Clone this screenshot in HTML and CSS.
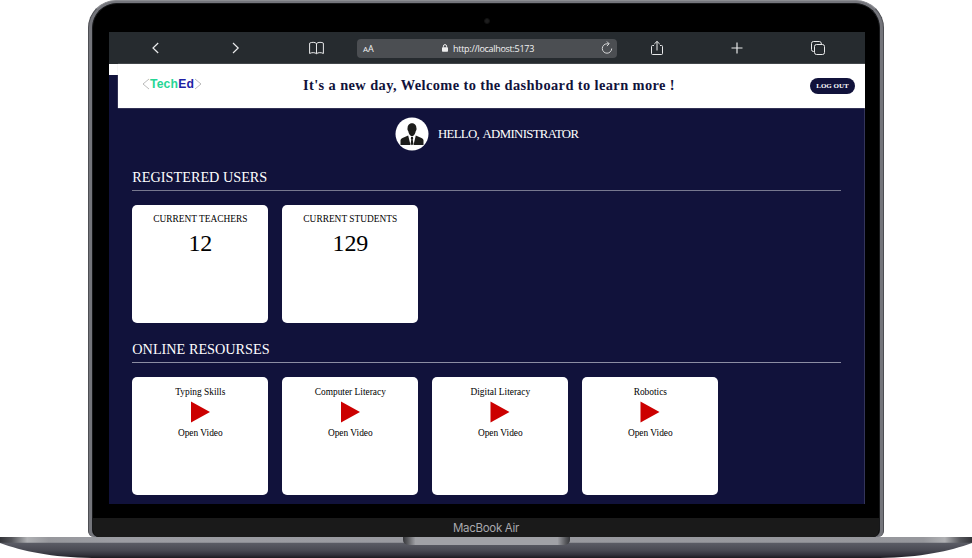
FILE: index.html
```html
<!DOCTYPE html>
<html lang="en">
<head>
<meta charset="utf-8">
<title>TechEd Dashboard</title>
<link rel="stylesheet" href="styles.css">
</head>
<body>
<div class="laptop">
  <div class="lid">
    <div class="bezel">
      <div class="camera-row"><span class="camera"></span></div>
      <div class="screen">
        <nav class="browser">
          <svg class="icon" viewBox="0 0 16 16"><path d="M10.200 3 5 8l5.200 5"/></svg>
          <svg class="icon" viewBox="0 0 16 16"><path d="M5 3l5.200 5L5 13"/></svg>
          <svg class="icon thin" viewBox="0 0 16 16"><path d="M7.500 3.500C6 2 2.500 2 .600 3.200V13.500C2.500 12.300 6 12.300 7.500 13.700 9 12.300 12.500 12.300 14.400 13.500V3.200C13 2 9 2 7.500 3.500ZM7.500 3.500V13.700"/></svg>
          <div class="address">
            <span class="reader"><small>A</small>A</span>
            <span class="url">
              <svg class="lock" viewBox="0 0 6 8"><rect x="0" y="3.300" width="6" height="4.500" rx=".7" fill="#eee"/><path d="M1.400 3.500V2.200a1.600 1.600 0 0 1 3.200 0v1.300" fill="none" stroke="#eee"/></svg>
              <span>http://localhost:5173</span>
            </span>
            <svg class="reload" viewBox="0 0 12 14"><path d="M10.700 7.500A4.700 4.700 0 1 1 6 2.800H8M5.900 .5 8.200 2.800 5.900 5.100"/></svg>
          </div>
          <svg class="icon thin" viewBox="0 0 16 16"><path d="M5 5.500H3.500Q2.500 5.500 2.500 6.500V13.500Q2.500 14.500 3.500 14.500H12.500Q13.500 14.500 13.500 13.500V6.500Q13.500 5.500 12.500 5.500H11M8 10.500V1.500M5.300 4 8 1.400 10.700 4"/></svg>
          <svg class="icon" viewBox="0 0 16 16"><path d="M8 2.500V13.500M2.500 8H13.500"/></svg>
          <svg class="icon thin" viewBox="0 0 16 16"><rect x="4.500" y="4.500" width="10" height="10" rx="2"/><path d="M4.500 11.500H3.500Q1.500 11.500 1.500 9.500V3.500Q1.500 1.500 3.500 1.500H9.500Q11.500 1.500 11.500 4.500"/></svg>
        </nav>
        <div class="page">
          <header class="topbar">
            <div class="logo">
              <svg viewBox="0 0 8 12"><path d="M7 1 1 6l6 5"/></svg><span class="tech">Tech</span><span class="ed">Ed</span><svg viewBox="0 0 8 12"><path d="M1 1 7 6 1 11"/></svg>
            </div>
            <h1>It's a new day, Welcome to the dashboard to learn more !</h1>
            <button class="logout">LOG OUT</button>
          </header>
          <main>
            <div class="greeting">
              <svg class="avatar" viewBox="0 0 34 34"><circle cx="17" cy="17" r="16.500" fill="#fff"/><path d="M12.600 11C12.400 4.500 21.600 4.500 21.400 11 21.900 12 21.300 13.400 20.800 14 20.300 16.800 19.200 18 19 18.200L17 19.500 15 18.200C14.800 18 13.700 16.800 13.200 14 12.700 13.400 12.100 12 12.600 11Z" fill="#1d1d1b"/><path d="M13.200 18.500 15.500 28H5.500V23.300Q5.500 21.500 7.500 20.900ZM20.800 18.500 18.500 28H28.500V23.300Q28.500 21.500 26.500 20.900ZM16.100 20H17.900L18.200 21.500 17.700 22.500 18.400 27 17 28.300 15.600 27 16.300 22.500 15.800 21.500Z" fill="#1d1d1b"/></svg>
              <span>HELLO, ADMINISTRATOR</span>
            </div>
            <section>
              <h2>REGISTERED USERS</h2>
              <div class="cards">
                <article class="card"><p>CURRENT TEACHERS</p><strong>12</strong></article>
                <article class="card"><p>CURRENT STUDENTS</p><strong>129</strong></article>
              </div>
            </section>
            <section class="resources">
              <h2>ONLINE RESOURSES</h2>
              <div class="cards">
                <article class="card video"><p>Typing Skills</p><svg viewBox="0 0 20 22"><path d="M1 .500 20 11 1 21.500Z"/></svg><p>Open Video</p></article>
                <article class="card video"><p>Computer Literacy</p><svg viewBox="0 0 20 22"><path d="M1 .500 20 11 1 21.500Z"/></svg><p>Open Video</p></article>
                <article class="card video"><p>Digital Literacy</p><svg viewBox="0 0 20 22"><path d="M.500.500 19.500 11 .500 21.500Z"/></svg><p>Open Video</p></article>
                <article class="card video"><p>Robotics</p><svg viewBox="0 0 20 22"><path d="M.500.500 19.500 11 .500 21.500Z"/></svg><p>Open Video</p></article>
              </div>
            </section>
          </main>
        </div>
      </div>
      <div class="chin">MacBook Air</div>
    </div>
  </div>
  <svg class="base" viewBox="0 0 972 21">
    <defs>
      <linearGradient id="lip" x1="0" x2="1" y1="0" y2="0"><stop offset="0" stop-color="#333439"/><stop offset=".012" stop-color="#55565b"/><stop offset=".028" stop-color="#b0b1b4"/><stop offset=".05" stop-color="#96979c"/><stop offset=".12" stop-color="#9c9da3"/><stop offset=".95" stop-color="#96979c"/><stop offset=".972" stop-color="#b0b1b4"/><stop offset=".988" stop-color="#55565b"/><stop offset="1" stop-color="#333439"/></linearGradient>
      <linearGradient id="body" x1="0" x2="0" y1="0" y2="1"><stop offset="0" stop-color="#5d5f68"/><stop offset=".5" stop-color="#4a4b54"/><stop offset=".8" stop-color="#33333c"/><stop offset="1" stop-color="#1b1a20"/></linearGradient>
      <linearGradient id="notch" x1="0" x2="1" y1="0" y2="0"><stop offset="0" stop-color="#36373b"/><stop offset=".025" stop-color="#55565a"/><stop offset=".075" stop-color="#a0a1a6"/><stop offset=".925" stop-color="#a0a1a6"/><stop offset=".975" stop-color="#55565a"/><stop offset="1" stop-color="#36373b"/></linearGradient>
    </defs>
    <path d="M0 5H972V6C950 14 920 20.500 880 21H92C52 20.500 22 14 0 6Z" fill="url(#body)"/>
    <path d="M0 0H972V5.800H0Z" fill="url(#lip)"/>
    <path d="M403 0H570V3Q570 8 563 8H410Q403 8 403 3Z" fill="url(#notch)"/>
  </svg>
</div>
</body>
</html>
```

FILE: styles.css
```css
* { box-sizing: border-box; }
body, h1, h2, p { margin: 0; }
body { background: #fff; overflow: hidden; font-family: "Liberation Serif", serif; }
.laptop { width: 972px; height: 558px; display: flex; flex-direction: column; }
.lid {
  height: 537px;
  margin: 0 88px;
  padding: 2px 3px 0;
  background: #74757b;
  border: 1px solid #4d4e53;
  border-top-color: #8b8c91;
  border-bottom: 0;
  border-radius: 28px 28px 6px 6px;
}
.bezel {
  height: 534px;
  background: #000;
  border: 1px solid #17181a;
  border-bottom: 0;
  border-radius: 25px 25px 7px 7px;
  overflow: hidden;
}
.camera-row { height: 28px; display: flex; justify-content: center; padding: 14px 0 0 1px; }
.camera { width: 6px; height: 6px; border-radius: 50%; background: #1d1d1e; border: 1px solid #111; }
.screen { width: 756px; height: 472px; margin-left: 16px; display: flex; flex-direction: column; overflow: hidden; }
.browser {
  height: 32px;
  flex: none;
  display: grid;
  grid-template-columns: repeat(3, 80.500px) 1fr repeat(3, 80.500px);
  align-items: center;
  justify-items: center;
  padding: 0 7px 0 6.500px;
  background: #262b2f;
}
.icon { width: 16px; height: 16px; fill: none; stroke: #e8e9ea; stroke-width: 1.200; }
.thin { stroke-width: 1; }
.address {
  width: 100%;
  height: 19px;
  display: flex;
  align-items: center;
  justify-content: space-between;
  padding: 0 4px 0 6px;
  border-radius: 4px;
  background: #4b4e52;
  color: #f2f2f2;
  font: 9px/19px "Open Sans", sans-serif;
}
.reader { letter-spacing: -.1px; }
.reader small { font-size: 8px; }
.url { display: flex; align-items: center; gap: 5px; margin-left: 2px; letter-spacing: -.29px; }
.lock { width: 6px; height: 8px; }
.reload { width: 12px; height: 14px; fill: none; stroke: #d5d6d7; }
.page {
  flex: 1;
  padding-left: 9px;
  background: linear-gradient(#fff 11px, #11123b 11px);
  border-right: 1px solid #34355a;
}
.topbar {
  height: 44px;
  margin-right: -1px;
  display: grid;
  grid-template-columns: 161px 1fr 45px;
  align-items: center;
  padding: 0 10px 0 24px;
  background: #fff;
  box-shadow: 0 0 1px #ccc;
}
.logo { display: flex; align-items: center; font: bold 12.200px/14px "Liberation Sans", sans-serif; letter-spacing: .15px; margin-top: -4px; }
.logo svg { width: 8px; height: 12px; fill: none; stroke: #aaa; stroke-width: .8; }
.tech { color: #26d695; }
.ed { color: #1f1fa5; }
h1 { margin-top: -2px; color: #11123b; font-size: 14.400px; line-height: 18px; letter-spacing: .4px; white-space: nowrap; }
.logout {
  width: 45px;
  height: 16px;
  padding: 0;
  border: 0;
  border-radius: 8px;
  background: #11123b;
  color: #fff;
  font: bold 7px/16px "Liberation Serif", serif;
  white-space: nowrap;
}
main { padding: 9px 23px 0 14.300px; color: #fff; }
.greeting { height: 34px; display: flex; align-items: center; justify-content: center; gap: 9px; font-size: 12.800px; letter-spacing: -.65px; word-spacing: 1.500px; }
.avatar { width: 34px; height: 34px; }
h2 { height: 27px; margin-top: 13px; padding-top: 4px; border-bottom: 1px solid #77788f; font-size: 14.250px; line-height: 18px; font-weight: 400; }
.resources h2 { border-color: #8c8da3; }
.cards { display: flex; gap: 14px; margin-top: 14px; }
.card {
  width: 136px;
  height: 118px;
  display: flex;
  flex-direction: column;
  align-items: center;
  padding-top: 8px;
  border-radius: 5px;
  background: #fff;
  color: #000;
  font-size: 9.400px;
  line-height: 12px;
}
.card strong { font-weight: 400; font-size: 24px; line-height: 28px; margin-top: 4px; letter-spacing: -.2px; }
.video { padding-top: 9px; }
.video svg { width: 20px; height: 22px; margin: 3px 0 4px; fill: #c00; }
.chin {
  height: 20px;
  margin-top: 14px;
  background: #1a1a1a;
  color: #a8a8ad;
  font: 11.500px/20px Inter, sans-serif;
  letter-spacing: -.3px;
  text-align: center;
  border-radius: 0 0 8px 8px;
}
.base { display: block; width: 972px; height: 21px; }
```
